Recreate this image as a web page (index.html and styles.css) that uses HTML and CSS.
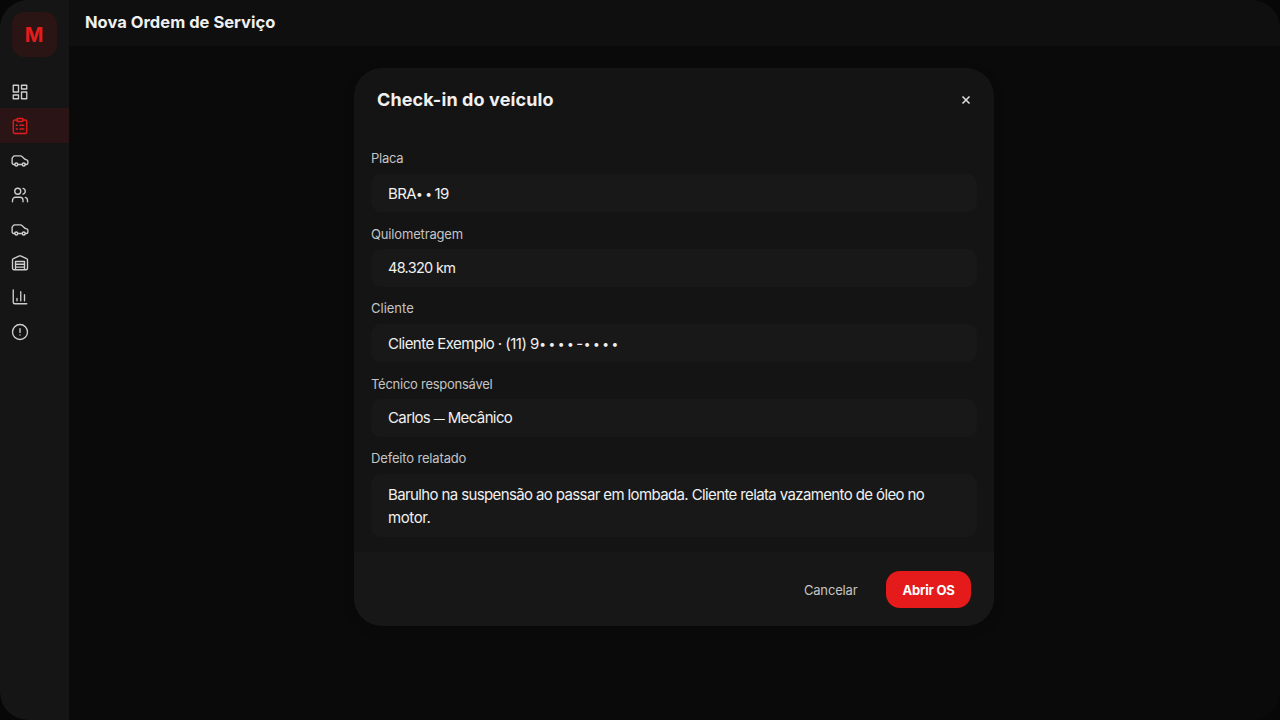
FILE: index.html
```html
<!DOCTYPE html>
<html lang="pt-BR">
<head>
<meta charset="utf-8">
<title>Nova Ordem de Serviço</title>
<link rel="stylesheet" href="styles.css">
</head>
<body>
<div class="app">
  <aside class="sidebar">
    <div class="logo">M</div>
    <nav class="nav">
      <a class="nav-item"><svg class="icon" viewBox="0 0 24 24"><path d="M3 3h7v9H3zM14 3h7v5h-7zM14 12h7v9h-7zM3 16h7v5H3z"/></svg></a>
      <a class="nav-item active"><svg class="icon" viewBox="0 0 24 24"><rect x="8" y="2" width="8" height="4" rx="1"/><path d="M16 4h3a2 2 0 0 1 2 2v14a2 2 0 0 1-2 2H5a2 2 0 0 1-2-2V6a2 2 0 0 1 2-2h3M12 11h5M12 16h5M7 11h1.500M7 16h1.500"/></svg></a>
      <a class="nav-item"><svg class="icon" viewBox="0 0 24 24"><path d="M5 18H3.500a2 2 0 0 1-2-2V9.500L3 7.600A2.500 2.500 0 0 1 5 6.500h7.500a3 3 0 0 1 2.100.9L18.500 11l2.500.8a2 2 0 0 1 1.500 2V16a2 2 0 0 1-2 2H19M9 18h6"/><circle cx="7" cy="18" r="2"/><circle cx="17" cy="18" r="2"/></svg></a>
      <a class="nav-item"><svg class="icon" viewBox="0 0 24 24"><path d="M16 21v-2a4 4 0 0 0-4-4H6a4 4 0 0 0-4 4v2M22 21v-2a4 4 0 0 0-3-3.870M16 3.130a4 4 0 0 1 0 7.750"/><circle cx="9" cy="7" r="4"/></svg></a>
      <a class="nav-item"><svg class="icon" viewBox="0 0 24 24"><path d="M5 18H3.500a2 2 0 0 1-2-2V9.500L3 7.600A2.500 2.500 0 0 1 5 6.500h7.500a3 3 0 0 1 2.100.9L18.500 11l2.500.8a2 2 0 0 1 1.500 2V16a2 2 0 0 1-2 2H19M9 18h6"/><circle cx="7" cy="18" r="2"/><circle cx="17" cy="18" r="2"/></svg></a>
      <a class="nav-item"><svg class="icon" viewBox="0 0 24 24"><path d="M22 8.350V19a2 2 0 0 1-2 2H4a2 2 0 0 1-2-2V8.350A2 2 0 0 1 3.260 6.300l8-3.700a2 2 0 0 1 1.480 0l8 3.700A2 2 0 0 1 22 8.350ZM6 21V10h12v11M6 13.700h12M6 17.400h12"/></svg></a>
      <a class="nav-item"><svg class="icon" viewBox="0 0 24 24"><path d="M3 2.500V19a2 2 0 0 0 2 2h16M8 17v-3M13 17V5M18 17V9"/></svg></a>
      <a class="nav-item"><svg class="icon" viewBox="0 0 24 24"><circle cx="12" cy="12" r="10"/><path d="M12 7.500v5M12 16h.01"/></svg></a>
    </nav>
  </aside>
  <div class="main">
    <header class="topbar"><h1 class="page-title">Nova Ordem de Serviço</h1></header>
    <main class="content">
      <section class="modal">
        <div class="modal-head">
          <h2 class="modal-title">Check-in do veículo</h2>
          <svg class="close" viewBox="0 0 10 10"><path d="M1.500 1.500l7 7M8.500 1.500l-7 7"/></svg>
        </div>
        <div class="fields">
          <div class="field"><span class="label l-placa">Placa</span><div class="input v-placa">BRA<span class="dots">••</span>19</div></div>
          <div class="field"><span class="label low">Quilometragem</span><div class="input v-km">48.320 km</div></div>
          <div class="field"><span class="label l-cliente">Cliente</span><div class="input v-cliente">Cliente Exemplo · (11) 9<span class="dots">••••</span><span class="hyphen">-</span><span class="dots">••••</span></div></div>
          <div class="field"><span class="label l-tec low">Técnico responsável</span><div class="input v-tec">Carlos <span class="em">—</span> Mecânico</div></div>
          <div class="field"><span class="label">Defeito relatado</span><div class="input area">Barulho na suspensão ao passar em lombada. Cliente relata vazamento de óleo no<br><span class="last">motor.</span></div></div>
        </div>
        <footer class="modal-foot">
          <span class="cancel">Cancelar</span>
          <span class="submit">Abrir OS</span>
        </footer>
      </section>
    </main>
  </div>
</div>
</body>
</html>
```
FILE: styles.css
```css
* { box-sizing: border-box; }
body { margin: 0; background: #070707; font-family: Inter, "Liberation Sans", sans-serif; color: #f0f0f0; }
.app { display: flex; width: 1280px; height: 720px; border-radius: 28px; overflow: hidden; background: #0a0a0a; }
.sidebar { width: 69px; background: #151515; padding-top: 12px; flex: none; }
.logo { width: 45px; height: 45px; margin-left: 12px; border-radius: 12px; background: #2a1414; color: #e51c1c; font-size: 20px; font-weight: 700; padding-right: 1px; display: flex; align-items: center; justify-content: center; }
.nav { margin-top: 17px; display: flex; flex-direction: column; }
.nav-item { height: 34.3px; padding: 1px 0 0 11px; display: flex; align-items: center; color: #cecece; }
.nav-item.active { background: #2a1416; color: #e51c1c; }
.icon { width: 18px; height: 18px; fill: none; stroke: currentColor; stroke-width: 1.8; stroke-linecap: round; stroke-linejoin: round; }
.main { flex: 1; display: flex; flex-direction: column; }
.topbar { height: 46px; background: #0f0f0f; padding-left: 16px; display: flex; align-items: center; }
.page-title { margin: 0; font-size: 16.5px; font-weight: 700; line-height: 45px; padding-bottom: 1px; letter-spacing: .03px; white-space: nowrap; }
.content { padding: 22px 0 0 285px; }
.modal { width: 640px; height: 558px; border-radius: 28px; background: #141414; overflow: hidden; display: flex; flex-direction: column; box-shadow: 0 4px 12px rgba(0,0,0,.15); }
.modal-head { height: 81px; padding: 20px 23px 0; display: flex; justify-content: space-between; align-items: flex-start; }
.modal-title { margin: 0; font-size: 18px; line-height: 24px; font-weight: 700; letter-spacing: .12px; white-space: nowrap; }
.close { width: 10px; height: 10px; margin-top: 7px; stroke: #dcdcdc; stroke-width: 1.6; fill: none; }
.fields { padding: 0 17px; flex: 1; }
.field { height: 75px; }
.label { display: block; width: max-content; height: 25px; line-height: 18px; font-size: 13px; letter-spacing: -.16px; color: #c4c4c4; }
.low { line-height: 20px; }
.l-placa { letter-spacing: -.25px; }
.l-cliente { letter-spacing: 0; }
.l-tec { letter-spacing: -.26px; }
.input { height: 38px; border-radius: 10px; background: #181818; padding-left: 17px; font-size: 15px; line-height: 38px; white-space: nowrap; letter-spacing: -.4px; }
.v-placa { line-height: 39px; letter-spacing: -.6px; }
.v-km { font-size: 14.5px; letter-spacing: -.7px; }
.v-cliente { line-height: 39px; letter-spacing: -.53px; }
.v-tec { letter-spacing: -.62px; }
.em { font-size: 11px; }
.area { height: 63px; padding-top: 9px; line-height: 23px; letter-spacing: -.62px; }
.last { letter-spacing: -.4px; }
.dots { font-size: 12px; line-height: 1; letter-spacing: 2.5px; vertical-align: 1px; }
.v-cliente .dots { margin-left: .5px; }
.hyphen { letter-spacing: 0; }
.modal-foot { height: 74px; background: #171717; display: flex; justify-content: flex-end; align-items: center; padding: 1px 23px 0 0; gap: 28.5px; }
.cancel { font-size: 13px; letter-spacing: -.15px; color: #c4c4c4; }
.submit { width: 85px; height: 37px; border-radius: 14px; background: #e51a1a; color: #fff; font-size: 13px; font-weight: 700; letter-spacing: -.2px; display: flex; align-items: center; justify-content: center; }
```
